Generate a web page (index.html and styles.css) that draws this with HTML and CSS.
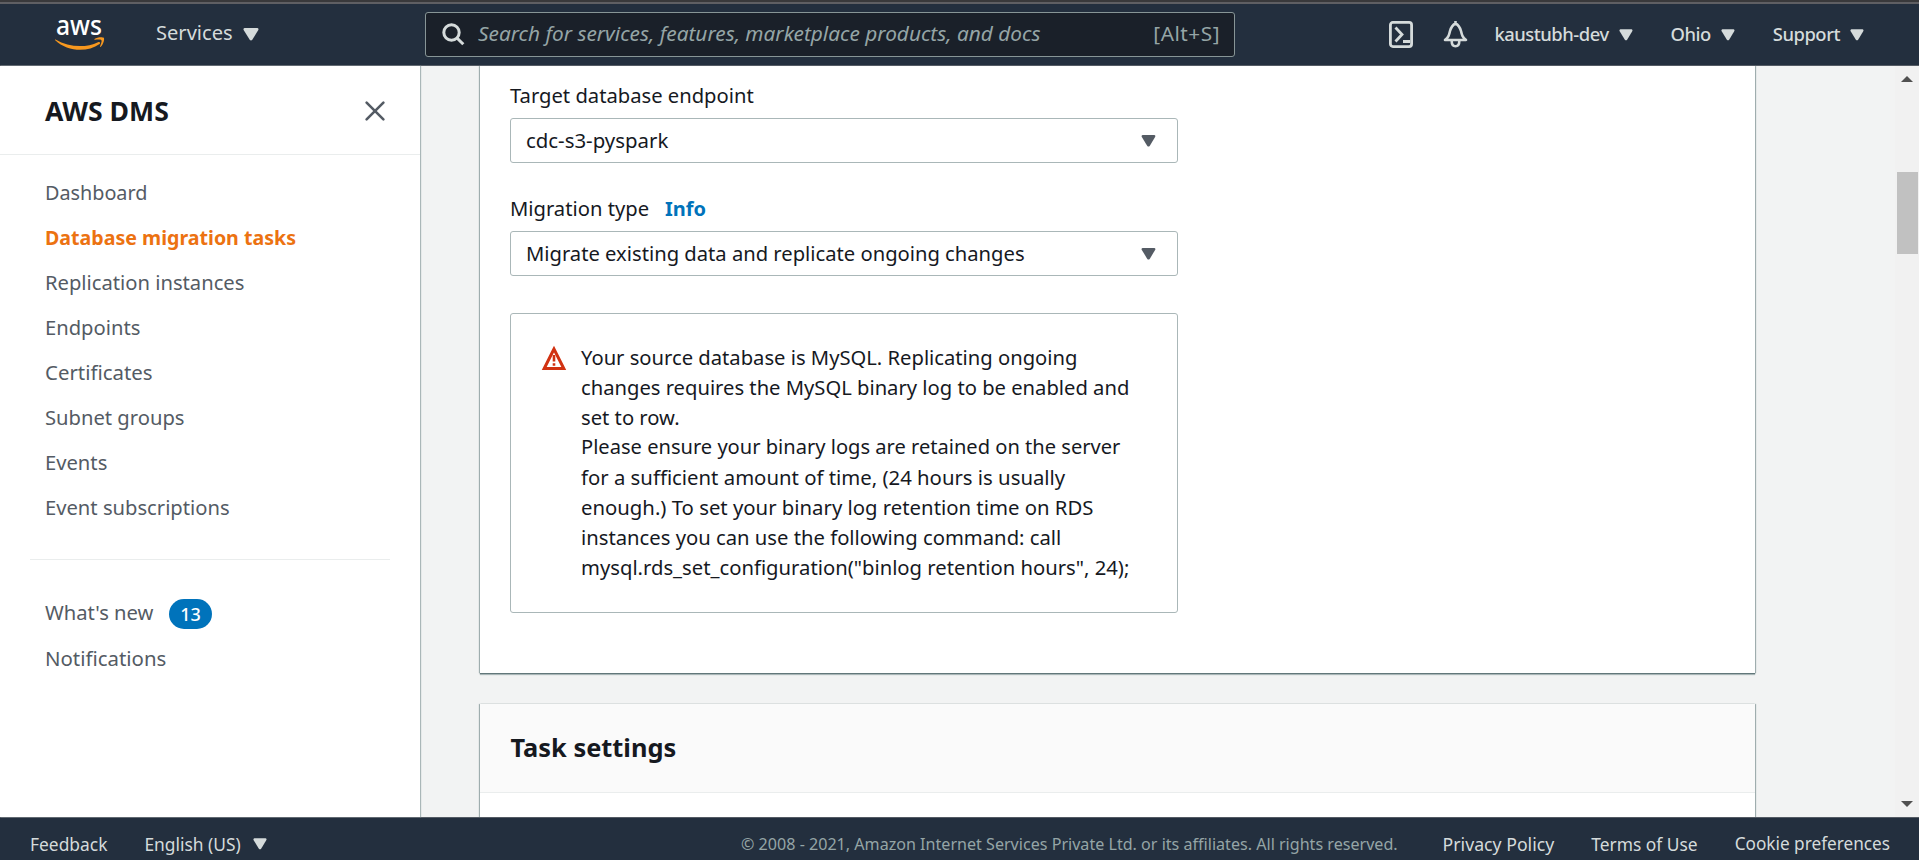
FILE: index.html
```html
<!DOCTYPE html>
<html lang="en">
<head>
<meta charset="utf-8">
<title>AWS DMS</title>
<link rel="stylesheet" href="styles.css">
</head>
<body>
<header class="topbar">
  <svg class="logo" viewBox="0 0 50 32" width="50" height="32"><text class="logo-word" x="1" y="15.800" textLength="46" lengthAdjust="spacingAndGlyphs">aws</text><path d="M.5 20.500C14 28.500 31 29 43 23.200c1.800-.8 3 .7 1.600 1.800C32 34 12 32.500.2 21.300c-.5-.6-.3-1.100.3-.8z" fill="#f7981f"/><path d="M39.500 20c2.500-2 8-2.300 9.300-1.200.9 1.200-.2 6.500-3 8.900-.6.5-1 .1-.7-.5.8-2 2-5.200 1.300-6-.7-.9-4.300-.6-6.200-.4-.8.1-1-.4-.7-.8z" fill="#f7981f"/></svg>
  <div class="top-item services"><span class="t">Services</span><svg class="caret big" viewBox="0 0 16 13"><path d="M1.500 0h13q1.500.6.8 1.900L9.300 11.800Q8 13 6.700 11.800L.6 1.900Q0 .6 1.500 0z"/></svg></div>
  <div class="search">
    <svg width="23" height="23" viewBox="0 0 23 23" fill="none" stroke="#d5dbdb" stroke-width="3"><circle cx="9.500" cy="9.500" r="7.700"/><path d="M15 15l6.300 6.300"/></svg>
    <span class="t placeholder">Search for services, features, marketplace products, and docs</span>
    <span class="t key">[Alt+S]</span>
  </div>
  <svg class="shell" width="24" height="27" viewBox="0 0 24 27" fill="none" stroke="#d5dbdb" stroke-width="2.800"><rect x="1.400" y="1.400" width="21.200" height="24.200" rx="2.500"/><path d="M6.500 6.500l6.500 7-6.500 7M14 20.500h7"/></svg>
  <svg class="bell" width="25" height="27" viewBox="0 0 25 27" fill="none" stroke="#d5dbdb" stroke-width="2.600" stroke-linejoin="round"><path d="M12.500 0v3M2 19c3.500-3 4-4.500 5-9C8 6.500 9.500 4 12.500 2.500 15.500 4 17 6.500 18 10c1 4.500 1.500 6 5 9zM8.700 20c0 3.500 1.500 5.200 3.800 5.200s3.800-1.700 3.800-5.200"/></svg>
  <div class="top-item small user"><span class="t">kaustubh-dev</span><svg class="caret" viewBox="0 0 16 13"><path d="M1.500 0h13q1.500.6.8 1.900L9.300 11.800Q8 13 6.700 11.800L.6 1.900Q0 .6 1.500 0z"/></svg></div>
  <div class="top-item small region"><span class="t">Ohio</span><svg class="caret" viewBox="0 0 16 13"><path d="M1.500 0h13q1.500.6.8 1.900L9.300 11.800Q8 13 6.700 11.800L.6 1.900Q0 .6 1.500 0z"/></svg></div>
  <div class="top-item small support"><span class="t">Support</span><svg class="caret" viewBox="0 0 16 13"><path d="M1.500 0h13q1.500.6.8 1.900L9.300 11.800Q8 13 6.700 11.800L.6 1.900Q0 .6 1.500 0z"/></svg></div>
</header>
<div class="body">
  <nav class="side">
    <div class="side-head"><h2 class="t">AWS DMS</h2><svg width="20" height="20" viewBox="0 0 20 20" stroke="#545b64" stroke-width="2.600" stroke-linecap="round"><path d="M1.600 1.600l16.800 16.800M18.400 1.600L1.600 18.400"/></svg></div>
    <ul class="links">
      <li class="first">Dashboard</li>
      <li class="active">Database migration tasks</li>
      <li>Replication instances</li>
      <li>Endpoints</li>
      <li class="wide">Certificates</li>
      <li>Subnet groups</li>
      <li>Events</li>
      <li>Event subscriptions</li>
    </ul>
    <ul class="links more">
      <li><span class="t">What's new</span><b class="badge">13</b></li>
      <li class="wide">Notifications</li>
    </ul>
  </nav>
  <main class="main">
    <section class="card config">
      <div class="label"><span class="t">Target database endpoint</span></div>
      <div class="select"><span class="t wide">cdc-s3-pyspark</span><svg class="caret" viewBox="0 0 16 13"><path d="M1.500 0h13q1.500.6.8 1.900L9.300 11.800Q8 13 6.700 11.800L.6 1.900Q0 .6 1.500 0z"/></svg></div>
      <div class="label second"><span class="t">Migration type</span><b class="t info">Info</b></div>
      <div class="select"><span class="t">Migrate existing data and replicate ongoing changes</span><svg class="caret" viewBox="0 0 16 13"><path d="M1.500 0h13q1.500.6.8 1.900L9.300 11.800Q8 13 6.700 11.800L.6 1.900Q0 .6 1.500 0z"/></svg></div>
      <div class="alert">
        <svg width="24" height="24" viewBox="0 0 24 24" fill="none" stroke="#d13212"><path stroke-width="3" d="M12 3L2.200 22.500h19.600z"/><path stroke-width="2.600" d="M12 9v6.500M12 17.200v2.600"/></svg>
        <p><span class="t">Your source database is MySQL. Replicating ongoing</span><span class="t">changes requires the MySQL binary log to be enabled and</span><span class="t">set to row.</span><span class="t">Please ensure your binary logs are retained on the server</span><span class="t">for a sufficient amount of time, (24 hours is usually</span><span class="t">enough.) To set your binary log retention time on RDS</span><span class="t">instances you can use the following command: call</span><span class="t">mysql.rds_set_configuration("binlog retention hours", 24);</span></p>
      </div>
    </section>
    <section class="card settings"><h2>Task settings</h2></section>
  </main>
  <div class="scroll"><i class="up"></i><i class="thumb"></i><i class="down"></i></div>
</div>
<footer class="footer">
  <span class="t">Feedback</span>
  <div class="lang"><span class="t">English (US)</span><svg class="caret" viewBox="0 0 16 13"><path d="M1.500 0h13q1.500.6.8 1.900L9.300 11.800Q8 13 6.700 11.800L.6 1.900Q0 .6 1.500 0z"/></svg></div>
  <span class="t copy">© 2008 - 2021, Amazon Internet Services Private Ltd. or its affiliates. All rights reserved.</span>
  <span class="t privacy">Privacy Policy</span><span class="t">Terms of Use</span><span class="t cookie">Cookie preferences</span>
</footer>
</body>
</html>
```
FILE: styles.css
```css
* { box-sizing: border-box; }
body { margin: 0; height: 860px; overflow: hidden; display: flex; flex-direction: column; font: 20.2px/30px "Noto Sans", sans-serif; color: #16191f; background: #f2f3f3; }
h2, p, ul { margin: 0; padding: 0; }
ul { list-style: none; }
.t { white-space: nowrap; }
svg { display: block; flex: none; overflow: visible; }
.caret { width: 14px; height: 12px; fill: #d5dbdb; }
.topbar { height: 66px; flex: none; display: flex; align-items: center; background: #232f3e; border-top: 4px solid #5f5f63; border-bottom: 1px solid #545b64; color: #d5dbdb; padding-left: 55px; position: relative; }
.topbar::before { content: ""; position: absolute; left: 0; top: -4px; width: 100%; height: 2px; background: #39393b; }
.logo-word { font: 500 27px "Noto Sans", sans-serif; fill: #fff; }
.services { margin-left: 51px; }
.top-item { display: flex; align-items: center; gap: 10px; font-size: 20.1px; }
.top-item .t { margin-top: -3px; }
.small { font-size: 18.4px; font-weight: 500; letter-spacing: -.48px; }
.small .t { margin-top: -2px; }
.caret.big { width: 16px; height: 13px; }
.search { position: absolute; left: 425px; top: 8px; width: 810px; height: 45px; display: flex; align-items: center; padding: 0 14px 0 16px; background: #1a2029; border: 1px solid #879596; border-radius: 3px; color: #95a5a6; }
.search .t { margin-top: -4px; }
.placeholder { font-style: italic; font-size: 20.8px; margin-left: 13px; }
.key { margin-left: auto; font-size: 20.8px; letter-spacing: .5px; }
.topbar .shell { margin-left: auto; }
.bell { margin-left: 30px; }
.user { margin-left: 26px; }
.region { margin-left: 38px; }
.support { margin-left: 38px; margin-right: 55px; }
.shell, .bell { margin-top: -1px; }
.body { flex: 1; min-height: 0; display: flex; }
.side { width: 420px; flex: none; background: #fff; box-shadow: 1px 0 1px #aab7b8; z-index: 1; }
.side-head { height: 89px; display: flex; align-items: center; justify-content: space-between; padding: 1px 35px 0 45px; border-bottom: 1px solid #eaeded; }
.side-head h2 { font-size: 26.6px; font-weight: 700; }
.links { padding: 15px 0 0 45px; color: #545b64; }
.links li { height: 45px; display: flex; align-items: center; padding-bottom: 2px; }
.links .first { font-size: 19.8px; padding-bottom: 0; }
.links .active { color: #ec7211; font-size: 19.6px; font-weight: 700; padding-bottom: 0; }
.wide, .links .wide { font-size: 20.4px; }
.more { margin: 29px 30px 0; padding: 31px 0 0 15px; border-top: 1px solid #eaeded; }
.more .t { margin-top: -2px; }
.more .badge { margin: 2px 0 0 15.5px; width: 43px; height: 30px; border-radius: 15px; background: #0073bb; color: #fff; font: 500 18px/30px "Noto Sans", sans-serif; text-align: center; }
.main { flex: 1; padding: 0 140px 0 60px; overflow: hidden; }
.card { background: #fff; box-shadow: 0 1px 1px #62777a, 0 2px 1px #b9c3c4, 1px 0 1px #aab7b8, -1px 0 1px #aab7b8; }
.config { height: 607px; padding: 14px 30px; }
.label { height: 30px; }
.second { margin-top: 30px; }
.info { color: #0073bb; margin-left: 16px; font-size: 20px; }
.select { width: 668px; height: 45px; margin-top: 8px; padding: 0 21px 0 15px; display: flex; align-items: center; justify-content: space-between; border: 1px solid #aab7b8; border-radius: 3px; }
.select .t { margin-top: -2px; }
.select .caret { width: 15px; fill: #545b64; }
.alert { width: 668px; height: 300px; margin-top: 37px; padding: 28px 31px; display: flex; border: 1px solid #aab7b8; border-radius: 3px; }
.alert svg { margin-top: 4px; }
.alert p { margin-left: 15px; }
.alert .t { display: block; height: 30px; }
.alert .t:nth-of-type(4) { font-size: 20.1px; }
.alert .t:nth-of-type(5), .alert .t:nth-of-type(6) { font-size: 20.32px; }
.alert .t:nth-of-type(7), .alert .t:nth-of-type(8) { font-size: 20.24px; }
.settings { margin-top: 31px; height: 200px; }
.settings h2 { height: 89px; line-height: 86px; padding-left: 30.5px; background: #fafafa; border-bottom: 1px solid #eaeded; font-size: 25.4px; }
.scroll { width: 24px; background: #f1f1f1; display: flex; flex-direction: column; align-items: center; padding: 10px 0; }
.up { border: 6px solid transparent; border-top: 0; border-bottom-color: #505050; }
.thumb { width: 21px; height: 82px; margin-top: 90px; background: #c1c1c1; }
.down { margin-top: auto; border: 6px solid transparent; border-bottom: 0; border-top-color: #505050; }
.footer { height: 43px; flex: none; display: flex; align-items: center; padding: 9px 29px 0 30px; background: #232f3e; border-top: 1px solid #545b64; color: #d5dbdb; font-size: 17.4px; gap: 37px; }
.lang { display: flex; align-items: center; gap: 12px; }
.copy { margin-left: auto; color: #95a5a6; font-size: 16.1px; }
.privacy { margin-left: 8px; font-size: 17.7px; }
.cookie { font-size: 17.2px; }
```
